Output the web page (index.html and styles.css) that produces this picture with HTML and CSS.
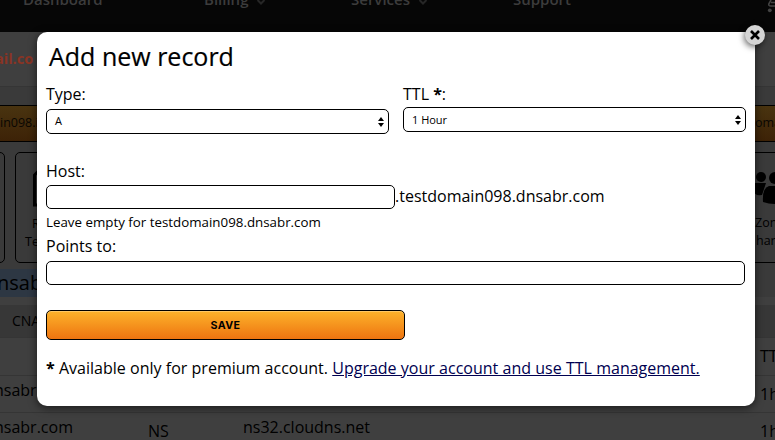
FILE: index.html
```
<!DOCTYPE html>
<html lang="en">
<head>
<meta charset="utf-8">
<title>Add new record</title>
<link rel="stylesheet" href="styles.css">
</head>
<body>
<div class="page">
  <nav class="nav">
    <span class="nav-item dashboard">Dashboard</span>
    <span class="nav-item billing">Billing <svg class="chev" viewBox="0 0 10 6"><path d="M1.5 1L5 4.5L8.5 1"/></svg></span>
    <span class="nav-item services">Services <svg class="chev" viewBox="0 0 10 6"><path d="M1.5 1L5 4.5L8.5 1"/></svg></span>
    <span class="nav-item support">Support</span>
    <svg class="cart" viewBox="0 0 14 14"><path d="M5 0L3 3.5Q2 6 5 6H14M5 2.5H14" /><circle cx="3.8" cy="10.3" r="1.9"/></svg>
  </nav>
  <div class="account"><span>ail.co</span></div>
  <div class="tabs">
    <div class="tab">in098.i</div>
    <div class="tab tab-right">oma</div>
  </div>
  <div class="tools">
    <div class="tool tool-edge"></div>
    <div class="tool tool-mid">
      <svg class="doc" viewBox="0 0 30 38"><path d="M1.5 36V6L6 1.5H28V36Z"/></svg>
      <span class="word-r">R</span>
      <span class="word-t">Te</span>
    </div>
    <div class="tool tool-share">
      <svg class="people" viewBox="0 0 36 34"><circle cx="7" cy="6" r="5"/><path d="M0 12H12L8 24Q0 25 0 20Z"/><circle cx="21" cy="7" r="6"/><path d="M15 15H27Q34 16 34 31Q20 35 9 31Q8 17 15 15Z"/></svg>
      <span>Zon</span><span class="share">har</span>
    </div>
  </div>
  <div class="zone"><span>nsab</span></div>
  <div class="filters"><span>CNA</span></div>
  <div class="row row-head"><span></span><span></span><span></span><span class="ttl">TTL</span></div>
  <div class="row"><span class="host">nsabr</span><span></span><span></span><span class="ttl">1h</span></div>
  <div class="row"><span class="host">nsabr.com</span><span class="kind">NS</span><span class="value">ns32.cloudns.net</span><span class="ttl">1h</span></div>
</div>

<div class="dialog">
  <button class="close" aria-label="Close"><svg viewBox="0 0 20 20"><path d="M6 6L14 14M14 6L6 14"/></svg></button>
  <h1>Add new record</h1>
  <div class="fields">
    <div class="field">
      <div class="label">Type:</div>
      <div class="select select-type"><span>A</span><svg viewBox="0 0 6 10"><path d="M0 4L3 0L6 4ZM0 6L3 10L6 6Z"/></svg></div>
    </div>
    <div class="field">
      <div class="label">TTL <b>*</b>:</div>
      <div class="select select-ttl"><span>1 Hour</span><svg viewBox="0 0 6 10"><path d="M0 4L3 0L6 4ZM0 6L3 10L6 6Z"/></svg></div>
    </div>
  </div>
  <div class="label label-host">Host:</div>
  <div class="host-line"><input class="input input-host"><span>.testdomain098.dnsabr.com</span></div>
  <div class="hint">Leave empty for testdomain098.dnsabr.com</div>
  <div class="label label-points">Points to:</div>
  <input class="input input-points">
  <button class="save">SAVE</button>
  <p class="note"><b>*</b> Available only for premium account. <a href="#">Upgrade your account and use TTL management.</a></p>
</div>
</body>
</html>
```
FILE: styles.css
```
* { box-sizing: border-box; }
body {
  margin: 0;
  height: 440px;
  overflow: hidden;
  font: 16px/22px "Open Sans", sans-serif;
  color: #000;
}
.page {
  height: 440px;
  overflow: hidden;
  background: #3a3a3a;
  white-space: nowrap;
}
.nav {
  display: flex;
  height: 32px;
  background: #060606;
  color: #3c3c3c;
  font: 600 15px/22px "Open Sans", sans-serif;
}
.nav-item { margin-top: -12px; flex: none; }
.dashboard { width: 181px; padding-left: 23px; }
.billing { width: 170px; padding-left: 23px; }
.services { width: 162px; }
.support { width: 253px; }
.chev { width: 10px; height: 6px; margin-left: 4px; fill: none; stroke: #262626; stroke-width: 2; }
.cart { width: 14px; height: 14px; flex: none; fill: none; stroke: #444; stroke-width: 1.6; }
.cart circle { fill: #444; stroke: none; }
.account {
  height: 55px;
  padding-top: 16px;
  background: #3f3f3f;
  border-bottom: 1px solid #353535;
  color: #8a3424;
  font-size: 14.5px;
  font-weight: 700;
}
.account span { margin-left: -5px; }
.tabs { display: flex; justify-content: space-between; margin-top: 18px; }
.tab {
  width: 100px;
  height: 37px;
  overflow: hidden;
  border: solid #000;
  border-width: 1px 0;
  background: linear-gradient(#493410, #3d2207);
  color: #0a0703;
  font-size: 12.5px;
  line-height: 34px;
}
.tab-right { width: 20px; }
.tools { display: flex; margin-top: 10px; font-size: 12.5px; line-height: 18px; }
.tool { height: 111px; border: 1px solid #000; border-radius: 5px; }
.tool-edge { width: 10px; margin-left: -5px; flex: none; }
.tool-mid { width: 100px; margin-left: 10px; padding: 15px 0 0 16px; flex: none; }
.tool-mid span { display: block; }
.doc { display: block; width: 30px; height: 38px; margin: 1px 0 8px 1px; fill: none; stroke: #000; stroke-width: 3; }
.word-t { margin-left: -7px; }
.tool-share { width: 100px; margin-left: 595px; padding: 19px 0 0 44px; flex: none; }
.tool-share span { display: block; }
.tool-share .share { margin-left: 1px; }
.people { display: block; width: 36px; height: 34px; margin: -1px 0 9px -1px; }
.zone {
  width: 300px;
  height: 28px;
  margin-top: 6px;
  background: #2d3743;
  font-size: 20px;
  line-height: 28px;
}
.zone span { margin-left: -3px; }
.filters {
  height: 41px;
  margin-bottom: 0;
  padding: 0 0 0 12px;
  border-top: 8px solid #3f3f3f;
  border-bottom: 1px solid #353535;
  background: #373737;
  font-size: 14px;
  line-height: 32px;
}
.row {
  display: grid;
  grid-template-columns: 148px 95px 517px 60px;
  height: 37px;
  border-bottom: 1px solid #353535;
  background: #3f3f3f;
  line-height: 37px;
}
.row-head { height: 38px; }
.host { margin-left: -6px; line-height: 29px; }
.value { line-height: 29px; }
.kind { line-height: 37px; }
.ttl { line-height: 37px; }

.dialog {
  position: absolute;
  left: 37px;
  top: 32px;
  width: 718px;
  height: 374px;
  padding: 6px 9px 0;
  border-radius: 10px;
  background: #fff;
  box-shadow: 0 2px 8px rgba(0, 0, 0, .6);
}
.close {
  position: absolute;
  top: -7px;
  right: -10px;
  width: 20px;
  height: 20px;
  padding: 0;
  border: 0;
  border-radius: 50%;
  background: #d4d4d4;
  box-shadow: -1px 2px 6px rgba(0, 0, 0, .6);
}
.close svg { display: block; width: 20px; height: 20px; fill: none; stroke: #000; stroke-width: 2.6; }
h1 { margin: 0 0 9px 3px; font-size: 25px; font-weight: 400; line-height: 36px; -webkit-text-stroke: .2px #000; }
.fields { display: flex; gap: 14px; height: 77px; }
.field { width: 343px; }
.label { height: 22px; }
.select {
  display: flex;
  justify-content: space-between;
  align-items: center;
  height: 25px;
  padding: 0 4px 0 8px;
  border: 1px solid #000;
  border-radius: 5px;
  font-size: 11px;
  line-height: 23px;
}
.select-type span { margin-top: -2px; }
.select svg { width: 6px; height: 10px; }
.select-type { margin-top: 4px; }
.select-ttl { margin-top: 2px; }
.host-line { display: flex; height: 24px; margin-top: 3px; }
.input {
  display: block;
  height: 24px;
  padding: 0 8px;
  border: 1px solid #000;
  border-radius: 5px;
  background: #fff;
}
.input-host { width: 349px; }
.hint { margin-top: 3px; font-size: 13.33px; line-height: 20px; }
.label-points { margin-top: 3px; }
.input-points { width: 699px; margin-top: 4px; }
.save {
  display: block;
  width: 359px;
  height: 30px;
  margin-top: 25px;
  padding: 1px 0 0;
  border: 1px solid #000;
  border-radius: 5px;
  background: linear-gradient(#fdb32b, #ee7410);
  box-shadow: inset 0 1px #ffc864;
  font: 700 10.7px/28px Inter, sans-serif;
  letter-spacing: .4px;
}
.note { margin: 17px 0 0; white-space: nowrap; word-spacing: .1px; }
.note a { color: #000050; }
```
